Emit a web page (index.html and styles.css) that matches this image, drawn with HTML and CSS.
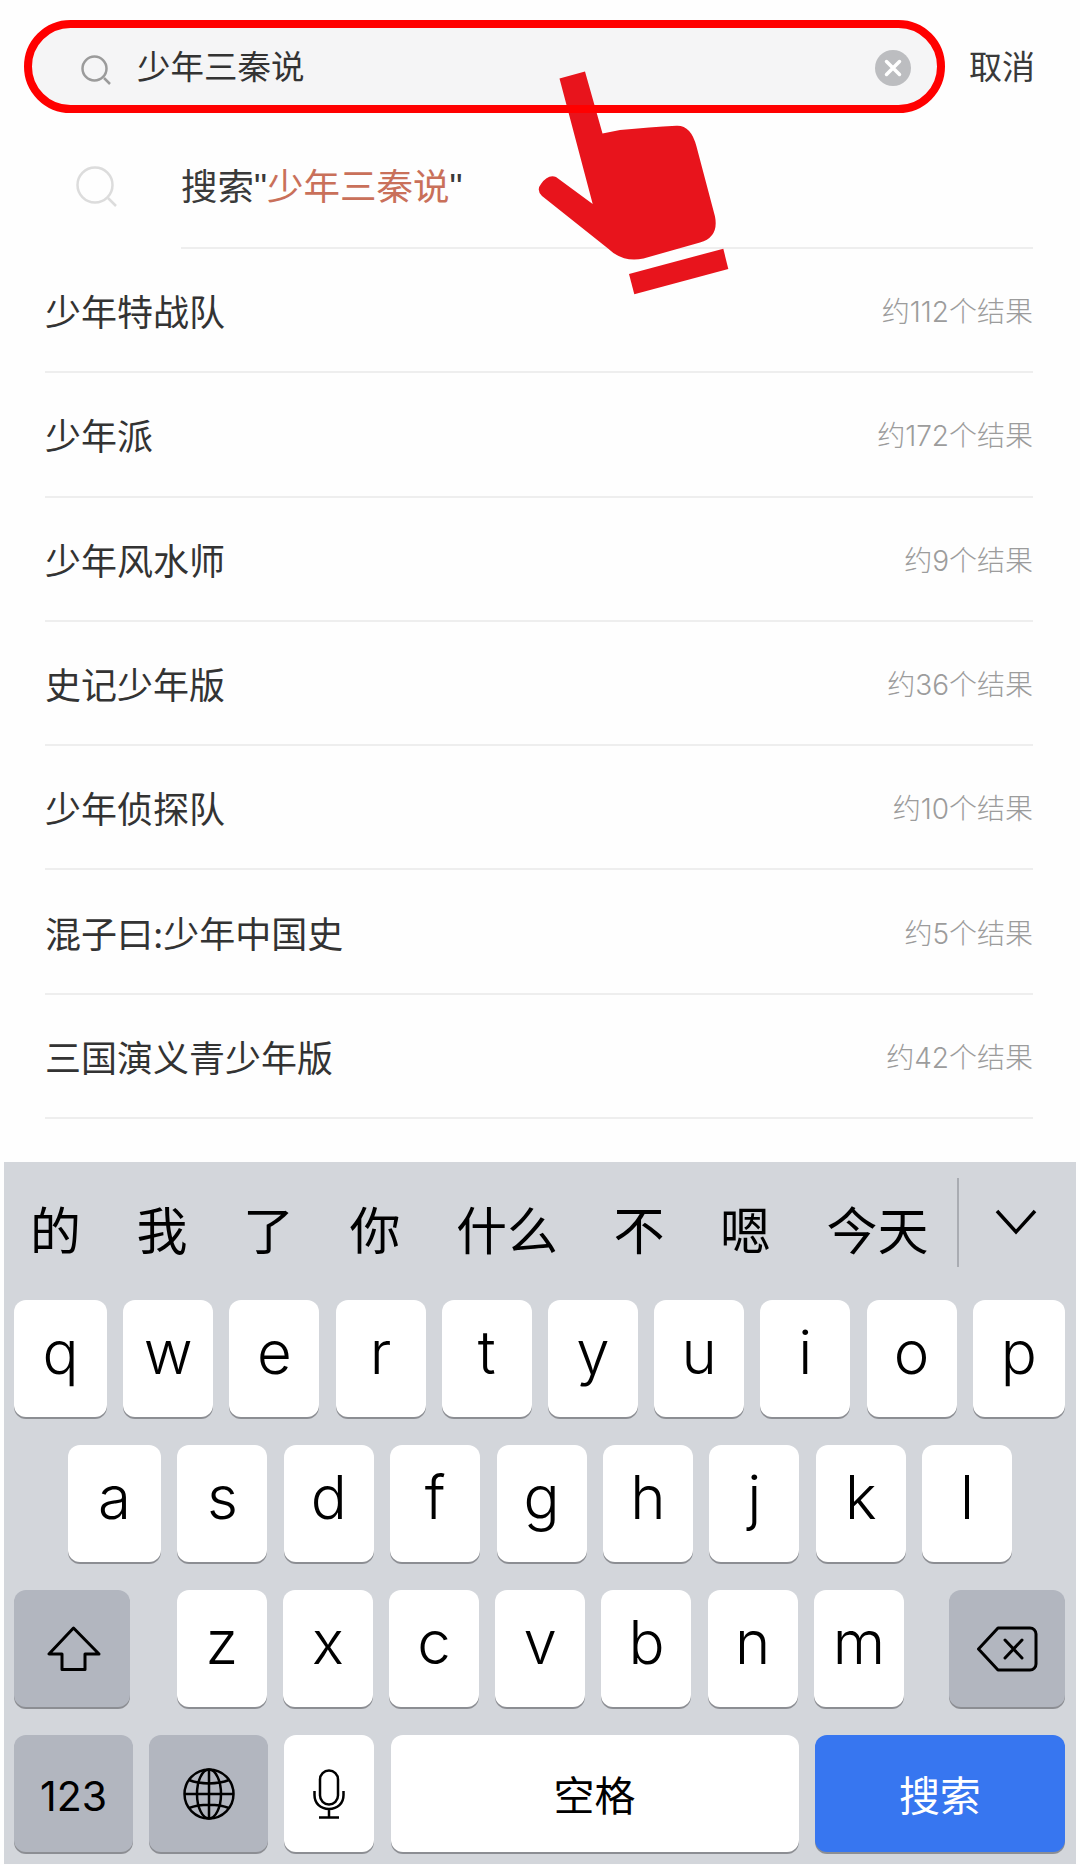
FILE: index.html
```html
<!DOCTYPE html>
<html lang="zh-CN">
<head>
<meta charset="utf-8">
<title>搜索</title>
<link rel="stylesheet" href="styles.css">
</head>
<body>
<div class="page">
  <header class="search-head">
    <div class="search-box">
      <svg class="icon-search" viewBox="0 0 30 30" aria-hidden="true"><circle cx="13.5" cy="13.5" r="12"/><path d="M23 23l6 6"/></svg>
      <span class="search-text">少年三秦说</span>
      <svg class="icon-clear" viewBox="0 0 36 36" aria-hidden="true"><circle cx="18" cy="18" r="18"/><path d="M11.5 11.5l13 13M24.5 11.5l-13 13"/></svg>
    </div>
    <span class="cancel">取消</span>
  </header>

  <section class="suggest">
    <svg class="icon-suggest" viewBox="0 0 42 42" aria-hidden="true"><circle cx="19" cy="19" r="17.5"/><path d="M32 32l8 8"/></svg>
    <div class="suggest-body">搜索"<em class="hl">少年三秦说</em>"</div>
  </section>

  <ul class="results">
    <li class="row"><span class="name">少年特战队</span><span class="count">约112个结果</span></li>
    <li class="row"><span class="name">少年派</span><span class="count">约172个结果</span></li>
    <li class="row"><span class="name">少年风水师</span><span class="count">约9个结果</span></li>
    <li class="row"><span class="name">史记少年版</span><span class="count">约36个结果</span></li>
    <li class="row"><span class="name">少年侦探队</span><span class="count">约10个结果</span></li>
    <li class="row"><span class="name">混子曰:少年中国史</span><span class="count">约5个结果</span></li>
    <li class="row"><span class="name">三国演义青少年版</span><span class="count">约42个结果</span></li>
  </ul>

  <section class="keyboard">
    <div class="candidates">
      <div class="cand-list">
        <span>的</span><span>我</span><span>了</span><span>你</span><span>什么</span><span>不</span><span>嗯</span><span>今天</span>
      </div>
      <div class="cand-toggle">
        <svg class="icon-chevron" viewBox="0 0 42 26" aria-hidden="true"><path d="M2 2l19 21L40 2"/></svg>
      </div>
    </div>

    <div class="key-row">
      <div class="key w-q">q</div><div class="key">w</div><div class="key">e</div><div class="key">r</div><div class="key">t</div><div class="key">y</div><div class="key">u</div><div class="key">i</div><div class="key">o</div><div class="key w-p">p</div>
    </div>
    <div class="key-row home">
      <div class="key w-a">a</div><div class="key">s</div><div class="key">d</div><div class="key">f</div><div class="key">g</div><div class="key">h</div><div class="key">j</div><div class="key">k</div><div class="key">l</div>
    </div>
    <div class="key-row">
      <div class="key func w-shift">
        <svg class="icon-shift" viewBox="0 0 54 48" aria-hidden="true"><path d="M26.500 2L2 28h13v15.500h23V28h14z"/></svg>
      </div>
      <div class="key">z</div><div class="key">x</div><div class="key">c</div><div class="key">v</div><div class="key">b</div><div class="key">n</div><div class="key">m</div>
      <div class="key func w-del">
        <svg class="icon-del" viewBox="0 0 62 46" aria-hidden="true"><path d="M22 2h32a6 6 0 0 1 6 6v30a6 6 0 0 1-6 6H22L2.500 23z"/><path class="thin" d="M29 14l17 18M46 14L29 32"/></svg>
      </div>
    </div>
    <div class="key-row">
      <div class="key func w-num text-key">123</div>
      <div class="key func w-num">
        <svg class="icon-globe" viewBox="0 0 52 52" aria-hidden="true"><circle cx="26" cy="26" r="24.500"/><ellipse cx="26" cy="26" rx="12" ry="24.500"/><path d="M26 1.500v49M1.500 26h49M6 12c11 4.500 29 4.500 40 0M6 40c11-4.500 29-4.500 40 0"/></svg>
      </div>
      <div class="key">
        <svg class="icon-mic" viewBox="0 0 32 50" aria-hidden="true"><rect x="7" y="1.500" width="18" height="34" rx="9"/><path d="M1.500 22v4c0 8.500 6 14 14.500 14s14.500-5.500 14.500-14v-4M16 40v8M6 48.500h20"/></svg>
      </div>
      <div class="key w-space text-key">空格</div>
      <div class="key w-go text-key">搜索</div>
    </div>
  </section>

  <svg class="hand" viewBox="0 0 1080 1865" aria-hidden="true">
    <path d="M559.500 78.500L585 71.500L602.500 133.500L620 130Q650 127 676.500 125.700Q691 125 696.500 146.500L715 216.500Q719 237 700 242.500L643.500 258.500Q623 263 608 248.500L542 196Q536 190 541 184Q548 174 556 177L592.700 204Z"/>
    <path d="M629 274L723.300 248.700L728.300 269L634.300 294.300Z"/>
  </svg>
</div>
</body>
</html>
```
FILE: styles.css
```css
* { box-sizing: border-box; }
html, body { margin: 0; padding: 0; }
body {
  background: #fefefe;
  font-family: Inter, "Noto Sans CJK SC", sans-serif;
  color: #333;
}
.page {
  position: relative;
  width: 1080px;
  height: 1865px;
  overflow: hidden;
}

/* search header */
.search-head {
  display: flex;
  align-items: center;
  padding: 28px 45px 0 32px;
}
.search-box {
  position: relative;
  width: 905px;
  height: 77px;
  display: flex;
  align-items: center;
  background: #f5f5f6;
  border-radius: 39px;
  padding-left: 49px;
}
.search-box::after {
  content: "";
  position: absolute;
  inset: -8px;
  border: 8px solid #ff0000;
  border-radius: 47px;
  z-index: 2;
}
.icon-search {
  width: 30px;
  height: 30px;
  margin-top: 6px;
  fill: none;
  stroke: #9b9b9b;
  stroke-width: 2.500;
}
.search-text {
  margin-left: 26px;
  margin-top: -5px;
  font-size: 33.500px;
  font-weight: 400;
  color: #333;
}
.icon-clear {
  width: 36px;
  height: 36px;
  margin-left: auto;
  margin-right: 26px;
  margin-top: 3px;
}
.icon-clear circle { fill: #bcbdc0; }
.icon-clear path { fill: none; stroke: #fff; stroke-width: 3.500; stroke-linecap: round; }
.cancel {
  margin-left: auto;
  margin-top: -3px;
  font-size: 33px;
  font-weight: 400;
  color: #3a3a3a;
}

/* suggestion */
.suggest {
  display: flex;
  align-items: flex-start;
  padding: 61px 47px 0 76px;
}
.icon-suggest {
  width: 42px;
  height: 42px;
  flex: none;
  fill: none;
  stroke: #dcdcdc;
  stroke-width: 2.500;
}
.suggest-body {
  flex: 1;
  margin-left: 63px;
  height: 83px;
  font-family: "Liberation Sans", "Noto Sans CJK SC", sans-serif;
  font-size: 36.500px;
  line-height: 44px;
  font-weight: 400;
  color: #3a3a3a;
  border-bottom: 2px solid #eeeeee;
}
.hl { font-style: normal; color: #c9705a; }

/* results */
.results {
  list-style: none;
  margin: 0;
  padding: 0 47px 0 45px;
}
.row {
  display: flex;
  align-items: center;
  justify-content: space-between;
  height: 124.300px;
  border-bottom: 2px solid #eeeeee;
}
.name { font-size: 36px; font-weight: 400; color: #333; }
.count { font-size: 28px; font-weight: 300; color: #9c9c9c; }

/* keyboard */
.keyboard {
  margin: 43px 4px 0;
  height: 702px;
  background: #d3d6db;
  padding: 0 10px;
  color: #000;
}
.candidates {
  display: flex;
  height: 137.500px;
}
.cand-list {
  display: flex;
  align-items: center;
  gap: 55.500px;
  width: 943px;
  padding: 0 0 0 16px;
  font-size: 51px;
  font-family: "Noto Sans CJK SC", sans-serif;
  font-weight: 400;
  position: relative;
  top: -3px;
}
.cand-toggle {
  flex: 1;
  height: 89px;
  margin-top: 16px;
  border-left: 2px solid #a9acb2;
  padding: 31px 0 0 36px;
}
.icon-chevron {
  display: block;
  width: 42px;
  height: 26px;
  fill: none;
  stroke: #000;
  stroke-width: 3.500;
}
.key-row {
  display: flex;
  gap: 16.200px;
  height: 117px;
  margin-bottom: 28.300px;
}
.home { padding-left: 54px; gap: 16.400px; }
.key {
  width: 90px;
  height: 117px;
  display: flex;
  align-items: center;
  justify-content: center;
  background: #ffffff;
  border-radius: 12px;
  box-shadow: 0 2px 0 #8c8e93;
  font-size: 60px;
  font-weight: 350;
  line-height: 1;
  padding-bottom: 13px;
}
.func { background: #b2b6bf; }
.w-q { width: 93px; }
.w-p { width: 92px; }
.w-a { width: 93px; }
.w-shift { width: 116px; margin-right: 30.500px; }
.w-del { width: 116px; margin-left: auto; margin-right: 1px; }
.w-num { width: 119px; }
.w-space { width: 408px; }
.w-go {
  flex: 1;
  margin-right: 1px;
  background: #3776f0;
  color: #ffffff;
}
.key.text-key { font-size: 41px; font-weight: 400; padding: 5px 0 0; }

/* key icons */
.icon-shift, .icon-del, .icon-globe, .icon-mic {
  flex: none;
  fill: none;
  stroke: #000;
}
.icon-shift { width: 54px; height: 48px; stroke-width: 3; stroke-linejoin: round; margin: 15px 0 0 3px; }
.icon-del { width: 62px; height: 46px; stroke-width: 3; stroke-linejoin: round; margin-top: 13px; }
.icon-del .thin { stroke-linecap: round; }
.icon-globe { width: 52px; height: 52px; stroke-width: 2.500; margin-top: 13px; }
.icon-mic { width: 32px; height: 50px; stroke-width: 2.500; margin-top: 13px; }

/* pointer annotation */
.hand {
  position: absolute;
  left: 0;
  top: 0;
  width: 1080px;
  height: 1865px;
  z-index: 1;
  fill: #e8141c;
  pointer-events: none;
}
```
